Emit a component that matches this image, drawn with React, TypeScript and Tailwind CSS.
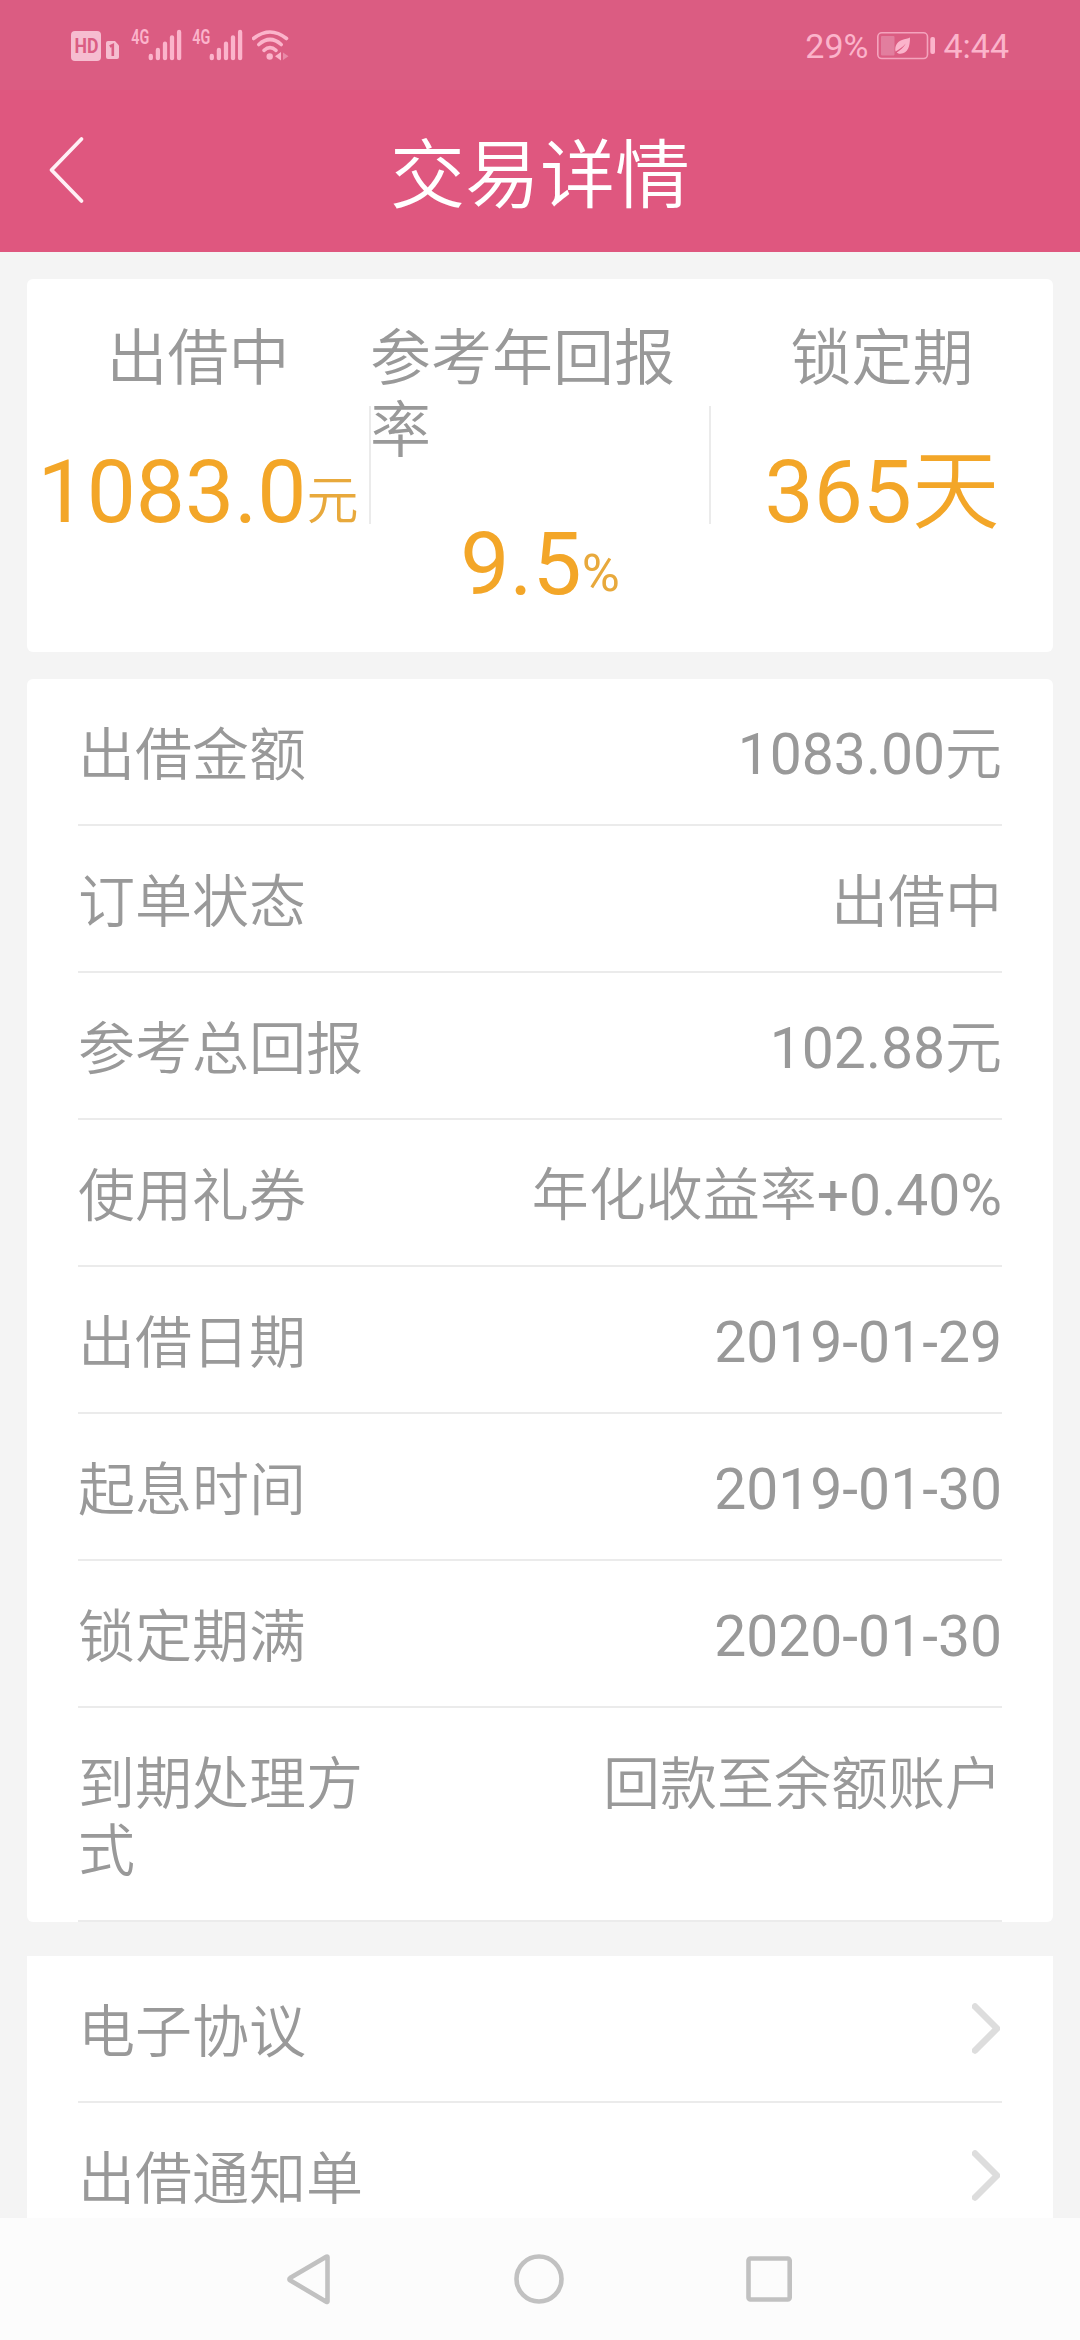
import type { ReactNode } from "react";

const details: [string, string][] = [
  ["出借金额", "1083.00元"],
  ["订单状态", "出借中"],
  ["参考总回报", "102.88元"],
  ["使用礼券", "年化收益率+0.40%"],
  ["出借日期", "2019-01-29"],
  ["起息时间", "2019-01-30"],
  ["锁定期满", "2020-01-30"],
  ["到期处理方式", "回款至余额账户"],
];

const links = ["电子协议", "出借通知单"];

function HdIcon() {
  return (
    <svg className="h-[90px] w-[60px]" viewBox="71 0 60 90">
      <rect x="71" y="31" width="30" height="30" rx="4" fill="#f6bdd0" />
      <text x="74.5" y="53" fontSize="19.5" fontWeight="700" fontFamily="Roboto" textLength="24" lengthAdjust="spacingAndGlyphs" fill="#db5d83">HD</text>
      <path d="M108 41h7l4 4.500v11.500a2 2 0 0 1-2 2h-9a2 2 0 0 1-2-2v-14a2 2 0 0 1 2-2z" fill="#f6bdd0" />
      <path d="M109.800 46.500l3-1.500v11" fill="none" stroke="#db5d83" strokeWidth="2.600" />
    </svg>
  );
}

function SignalIcon() {
  return (
    <svg className="h-[90px] w-[61px]" viewBox="131 0 61 90">
      <text x="131.300" y="43.500" fontSize="19.500" fontWeight="600" fontFamily="Roboto" textLength="18" lengthAdjust="spacingAndGlyphs" fill="#fbb4cb">4G</text>
      <g stroke="#fbb4cb" strokeWidth="4.300" strokeLinecap="round">
        <path d="M150.800 56v2.200M157.900 50v8.200M165 43.700v14.500M172 37.300v20.900M179.100 32v26.200" />
      </g>
    </svg>
  );
}

function WifiIcon() {
  return (
    <svg className="h-[90px] w-[40px]" viewBox="252 0 40 90">
      <g fill="none" stroke="#fbb4cb" strokeWidth="3.600" strokeLinecap="round">
        <path d="M253.500 38.500Q270 25.500 286.500 38.500" />
        <path d="M258.800 44.500Q270 34.500 281.200 44.500" />
        <path d="M264 50.300Q270 45 276 50.300" />
      </g>
      <circle cx="269.700" cy="56.500" r="3.200" fill="#fbb4cb" />
      <path d="M281 52v8.500l-6-4.200z" fill="#fbb4cb" />
      <path d="M283 52.500v7.500l5.500-3.800z" fill="#e88aa8" />
    </svg>
  );
}

function BatteryIcon() {
  return (
    <svg className="h-[90px] w-[60px]" viewBox="876 0 60 90">
      <rect x="877.800" y="32.800" width="49.700" height="25.700" rx="4" fill="none" stroke="#f4a3bd" strokeWidth="1.600" />
      <rect x="881" y="36" width="13.500" height="19.500" rx="1" fill="#e27e9e" />
      <path d="M910 37.500c0 9-2 15.500-9.500 16.200-1.800.2-3-.5-3.700-1.200 3-2 7-5 9-9-3.500 4-7 6-10.300 8-1-5.500 1.500-9.500 6.500-11.500 3-1.200 6-1.500 8-2.500z" fill="#fbb4cb" />
      <rect x="930.300" y="37" width="4.700" height="17" rx="2" fill="#fbb4cb" />
    </svg>
  );
}

function StatusBar() {
  return (
    <div className="flex h-[90px] items-start justify-between bg-[#db5c82] pr-[71px] pl-[71px]">
      <div className="flex">
        <HdIcon />
        <SignalIcon />
        <SignalIcon />
        <div className="-ml-px">
          <WifiIcon />
        </div>
      </div>
      <div className="flex text-[34px] leading-[40px] text-[#fbb4cb]">
        <span className="pt-[26px]">29%</span>
        <div className="pr-[7px] pl-2">
          <BatteryIcon />
        </div>
        <span className="pt-[26px]">4:44</span>
      </div>
    </div>
  );
}

function Stat({ width, labelWidth = "", label, value, unit }: { width: string; labelWidth?: string; label: string; value: string; unit?: ReactNode }) {
  return (
    <div className={`flex shrink-0 flex-col items-center pt-[44px] ${width}`}>
      <div className={`text-[61px] leading-[72px] text-[#999] ${labelWidth}`}>{label}</div>
      <div className="mt-[45px] h-[104px] text-[87.5px] leading-[104px] whitespace-nowrap text-[#f3a628]">
        {value}
        {unit && <span className="relative -top-[3px] text-[52px] leading-none text-[#e8a93c]">{unit}</span>}
      </div>
    </div>
  );
}

function Divider() {
  return <div className="mt-[127px] h-[118px] w-[2px] shrink-0 bg-[#ebebeb]" />;
}

export default function App() {
  return (
    <div className="flex h-[2340px] w-[1080px] flex-col overflow-hidden bg-[#f4f4f4] font-[Roboto,'Noto_Sans_CJK_SC_DemiLight','Noto_Sans_CJK_SC',sans-serif]">
      <StatusBar />
      <header className="grid h-[162px] shrink-0 grid-cols-[1fr_auto_1fr] bg-[#df577f]">
        <svg className="mt-[46px] ml-[48px] h-[68px] w-[37px]" viewBox="0 0 37 68" fill="none">
          <path d="M33.500 3L3.500 34l30 31" stroke="#fff0f5" strokeWidth="3.800" strokeLinecap="round" strokeLinejoin="round" />
        </svg>
        <h1 className="pt-[42px] text-[75px] leading-[88px] text-white">交易详情</h1>
      </header>

      <main className="flex min-h-0 flex-1 flex-col overflow-hidden px-[27px] pt-[27px]">
        <section className="flex h-[373px] shrink-0 items-start rounded-[6px] bg-white">
          <Stat width="w-[342px]" label="出借中" value="1083.0" unit="元" />
          <Divider />
          <Stat width="w-[338px]" labelWidth="w-[340px]" label="参考年回报率" value="9.5" unit="%" />
          <Divider />
          <Stat width="w-[342px]" label="锁定期" value="365天" />
        </section>

        <section className="mt-[27px] shrink-0 rounded-[6px] bg-white px-[51px] text-[57px] leading-[67px] text-[#999]">
          {details.map(([label, value]) => (
            <div key={label} className="flex justify-between border-b-2 border-[#ebebeb] pt-[42px] pb-[36px]">
              <span className="mt-px -mb-px w-[310px]">{label}</span>
              <span className={/\d/.test(value) ? "" : "mt-px -mb-px"}>{value}</span>
            </div>
          ))}
        </section>

        <section className="mt-[34px] shrink-0 bg-white px-[51px] text-[57px] leading-[67px] text-[#999]">
          {links.map((label) => (
            <div key={label} className="flex justify-between border-b-2 border-[#ebebeb] pt-[42px] pb-[36px]">
              <span className="mt-px -mb-px">{label}</span>
              <svg className="mt-[5px] mr-[2px] h-[51px] w-[28px]" viewBox="0 0 28 51" fill="none">
                <path d="M3 3.500L25 25.500L3 47.500" stroke="#ddd" strokeWidth="6.500" strokeLinecap="round" strokeLinejoin="round" />
              </svg>
            </div>
          ))}
        </section>
      </main>

      <nav className="flex h-[122px] shrink-0 items-center justify-between bg-[#fcfcfc] pr-[286px] pl-[285px]">
        <svg className="h-[54px] w-[48px]" viewBox="285 2252 48 54" fill="none" stroke="#c1c1c1" strokeWidth="4.600" strokeLinejoin="round">
          <path d="M327.500 2257v44.500a.5.5 0 0 1-.8.400L290 2280.300a1.300 1.300 0 0 1 0-2.200l36.700-21.500a.5.5 0 0 1 .8.400z" />
        </svg>
        <svg className="h-[54px] w-[54px]" viewBox="513 2252 54 54" fill="none" stroke="#c1c1c1" strokeWidth="4.600">
          <circle cx="540" cy="2279" r="22.500" />
        </svg>
        <svg className="h-[54px] w-[50px]" viewBox="744 2252 50 54" fill="none" stroke="#c1c1c1" strokeWidth="4.600">
          <rect x="748.500" y="2258.500" width="41.200" height="41" rx="2" />
        </svg>
      </nav>
    </div>
  );
}
